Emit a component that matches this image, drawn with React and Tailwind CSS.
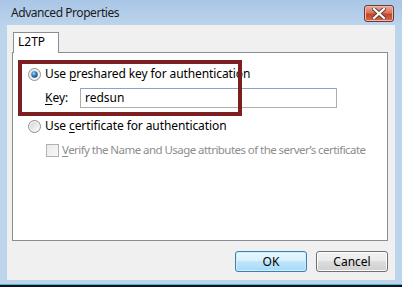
import React from "react";

const font = { fontFamily: '"Noto Sans", "Open Sans", sans-serif' };

function Radio({ checked }) {
  return (
    <svg width="13" height="13" viewBox="0 0 13 13" className="shrink-0">
      <defs>
        <linearGradient id={checked ? "rg1" : "rg0"} x1="0" y1="0" x2="1" y2="1">
          <stop offset="0" stopColor="#d6d6d6" />
          <stop offset="1" stopColor="#fbfbfb" />
        </linearGradient>
        <radialGradient id="dot" cx="0.4" cy="0.35" r="0.7">
          <stop offset="0" stopColor="#a9dcff" />
          <stop offset="0.5" stopColor="#2e7ec9" />
          <stop offset="1" stopColor="#17426f" />
        </radialGradient>
      </defs>
      <circle cx="6.5" cy="6.5" r="6" fill="#f4f4f4" stroke="#8e8f8f" />
      <circle cx="6.5" cy="6.5" r="4.5" fill={`url(#${checked ? "rg1" : "rg0"})`} />
      {checked && <circle cx="6.5" cy="6.5" r="3.2" fill="url(#dot)" />}
    </svg>
  );
}

function Btn({ children, primary }) {
  return (
    <button
      className={
        primary
          ? "flex h-[21px] w-[72px] items-center justify-center rounded-[3px] border border-[#3c7fb1] bg-[linear-gradient(#eaf6fd_0%,#d9f0fc_45%,#bee6fd_50%,#a7d9f5_100%)] text-[12px] text-black shadow-[inset_0_0_0_1px_#cdeefd]"
          : "flex h-[21px] w-[72px] items-center justify-center rounded-[3px] border border-[#707070] bg-[linear-gradient(#f2f2f2_0%,#ebebeb_45%,#dddddd_50%,#cfcfcf_100%)] text-[12px] text-black shadow-[inset_0_0_0_1px_#fcfcfc]"
      }
    >
      {children}
    </button>
  );
}

export default function App() {
  return (
    <div className="flex h-[287px] w-[402px] flex-col overflow-hidden bg-[#bcd4ec] text-black" style={font}>
      {/* title bar */}
      <div className="flex h-[25px] shrink-0 items-start justify-between bg-[linear-gradient(#a9c6e6,#bcd4ec)] pl-[11px] pr-[8px]">
        <span className="mt-[5px] whitespace-nowrap text-[12px] leading-[16px] tracking-[-0.45px] text-[#1b1b1b]">Advanced Properties</span>
        <div className="mt-[5px] flex h-[17px] w-[30px] items-center justify-center rounded-[3px] border border-[#6d3a33] bg-[linear-gradient(#e9a99a_0%,#d9765f_45%,#c5442a_55%,#d4674b_100%)] shadow-[inset_0_0_0_1px_#efb8a9]">
          <svg width="14" height="11" viewBox="0 0 14 11">
            <path d="M2 1 L12 10 M12 1 L2 10" stroke="#5a3a36" strokeWidth="4" strokeLinecap="square" />
            <path d="M2 1 L12 10 M12 1 L2 10" stroke="#ffffff" strokeWidth="2.2" strokeLinecap="square" />
          </svg>
        </div>
      </div>

      {/* client */}
      <div className="mx-[7px] flex h-[255px] shrink-0 flex-col bg-[#f0f0f0] pl-[5px] pr-[7px] pt-[7px]">
        <div className="ml-[1px] flex">
          <div className="relative z-10 -mb-[1px] flex h-[21px] w-[46px] items-start border border-b-0 border-[#898c95] bg-white pl-[4px] pt-[1px] text-[12px] leading-[16px]">
            L2TP
          </div>
        </div>
        <div className="relative h-[189px] border border-[#898c95] bg-white pl-[15px]">
          <div className="mt-[13px] flex h-[16px] items-center gap-[4px]">
            <Radio checked />
            <span className="whitespace-nowrap text-[12px] leading-[16px] tracking-[-0.1px]">
              Use <u className="underline-offset-2">p</u>reshared key for authentication
            </span>
          </div>
          <div className="mt-[6px] flex h-[20px] items-center">
            <span className="ml-[17px] w-[35px] text-[12px] leading-[16px]">
              <u className="underline-offset-2">K</u>ey:
            </span>
            <div className="flex h-[20px] w-[257px] items-center border border-[#abadb3] border-t-[#7fa7d1] bg-white pl-[4px] text-[12px]">
              redsun
            </div>
          </div>
          <div className="mt-[10px] flex h-[16px] items-center gap-[4px]">
            <Radio />
            <span className="whitespace-nowrap text-[12px] leading-[16px] tracking-[-0.1px]">
              Use <u className="underline-offset-2">c</u>ertificate for authentication
            </span>
          </div>
          <div className="ml-[18px] mt-[8px] flex h-[16px] items-center gap-[3px]">
            <div className="h-[13px] w-[13px] shrink-0 border border-[#b1b1b1] bg-[linear-gradient(135deg,#eaeaea,#f8f8f8)]" />
            <span className="whitespace-nowrap text-[11.5px] leading-[16px] tracking-[-0.55px] text-[#8d8d8d]">
              <u className="underline-offset-2">V</u>erify the Name and Usage attributes of the server’s certificate
            </span>
          </div>
          {/* annotation box */}
          <div className="pointer-events-none absolute left-[5px] top-[7px] h-[56px] w-[224px] border-[4px] border-[#7d1f21]" />
        </div>
        <div className="mt-[10px] flex justify-end gap-[9px]">
          <Btn primary>OK</Btn>
          <Btn>Cancel</Btn>
        </div>
      </div>

      {/* bottom frame */}
      <div className="h-[4px] shrink-0" />
      <div className="h-[1px] shrink-0 bg-[#41b4e4]" />
      <div className="flex-1 bg-[#111]" />
    </div>
  );
}
